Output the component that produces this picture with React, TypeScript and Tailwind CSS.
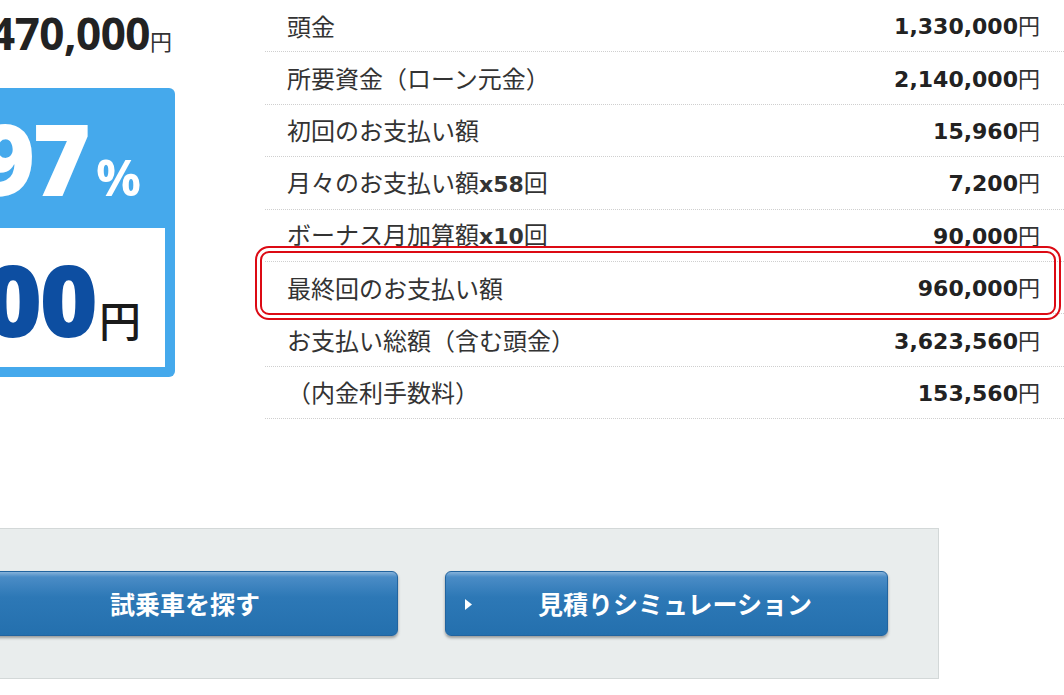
const jp = "font-['Noto_Sans_CJK_JP',sans-serif]";
const num = "font-['DejaVu_Sans','Noto_Sans_CJK_JP',sans-serif]";
const big = "font-['Open_Sans','Noto_Sans_CJK_JP',sans-serif]";

type Row = { label: React.ReactNode; value: string };

const rows: Row[] = [
  { label: "頭金", value: "1,330,000" },
  { label: "所要資金（ローン元金）", value: "2,140,000" },
  { label: "初回のお支払い額", value: "15,960" },
  {
    label: (
      <>
        月々のお支払い額<span className={`${num} font-bold text-[22px]`}>x58</span>回
      </>
    ),
    value: "7,200",
  },
  {
    label: (
      <>
        ボーナス月加算額<span className={`${num} font-bold text-[22px]`}>x10</span>回
      </>
    ),
    value: "90,000",
  },
  { label: "最終回のお支払い額", value: "960,000" },
  { label: "お支払い総額（含む頭金）", value: "3,623,560" },
  { label: "（内金利手数料）", value: "153,560" },
];

function Arrow() {
  return (
    <svg width="7" height="11" viewBox="0 0 7 11" className="absolute left-[19px] top-[27px]">
      <polygon points="0,0 7,5.5 0,11" fill="#fff" />
    </svg>
  );
}

function BlueButton({ label }: { label: string }) {
  return (
    <a
      href="#"
      className="relative flex items-center justify-center w-[443px] h-[65px] rounded-[6px] border border-[#22649f] bg-[linear-gradient(to_bottom,#86b2da_0%,#4a8cc6_8%,#2d78b6_40%,#2470ae_100%)] shadow-[0_2px_3px_rgba(0,0,0,0.35)] pl-[17px]"
    >
      <Arrow />
      <span className={`${jp} text-[25px] font-bold text-white leading-none`}>{label}</span>
    </a>
  );
}

export default function App() {
  return (
    <div className="relative w-[1064px] h-[695px] overflow-hidden bg-white">
      <div className="flex items-start">
        {/* left: price + rate box */}
        <div className="flex flex-col -ml-[100px] w-[275px] shrink-0">
          <div className="flex items-baseline justify-end pr-[3px] mt-[11px] text-[#222]">
            <span className={`${big} text-[44px] font-bold leading-none tracking-[-0.5px]`}>3,470,000</span>
            <span className={`${jp} text-[22px] leading-none text-[#333]`}>円</span>
          </div>
          <div className="mt-[33px] rounded-[6px] bg-[#45a9ec] pr-[10px] pb-[10px]">
            <div className="h-[140px] flex items-end justify-end pr-[24px] pb-[21px]">
              <div className="flex items-baseline text-white">
                <span className={`${big} text-[100px] font-extrabold leading-none tracking-[-3px]`}>3.97</span>
                <span className={`${big} text-[50px] font-bold leading-none ml-[8px]`}>%</span>
              </div>
            </div>
            <div className="h-[139px] bg-white flex items-end justify-end pr-[24px] pb-[19px]">
              <div className="flex items-baseline">
                <span className={`${big} text-[100px] font-extrabold leading-none text-[#0d4ea1] tracking-[-3px]`}>7,200</span>
                <span className={`${jp} text-[42px] font-medium leading-none text-[#1a1a1a] ml-[4px]`}>円</span>
              </div>
            </div>
          </div>
        </div>

        {/* right: loan table */}
        <div className="relative ml-[90px] flex-1">
          {rows.map((r, i) => (
            <div
              key={i}
              className="h-[52.4px] flex items-center justify-between pl-[22px] pr-[24px] border-b border-dotted border-[#cfcfcf]"
            >
              <span className={`${jp} text-[24px] leading-none text-[#333]`}>{r.label}</span>
              <span className="flex items-baseline text-[#222]">
                <span className={`${num} text-[22px] font-bold leading-none`}>{r.value}</span>
                <span className={`${jp} text-[22px] leading-none text-[#333]`}>円</span>
              </span>
            </div>
          ))}
          {/* highlight for 最終回 row */}
          <div className="absolute left-[-10px] right-[3px] top-[246px] h-[74px] rounded-[14px] border-[7px] border-double border-[#dc0a14]" />
        </div>
      </div>

      {/* bottom buttons */}
      <div className="mt-[109px] -ml-[95px] w-[1034px] border border-[#d3d8d8] bg-[#e9eded] px-[49px] py-[42px] flex gap-[47px]">
        <BlueButton label="試乗車を探す" />
        <BlueButton label="見積りシミュレーション" />
      </div>
    </div>
  );
}
